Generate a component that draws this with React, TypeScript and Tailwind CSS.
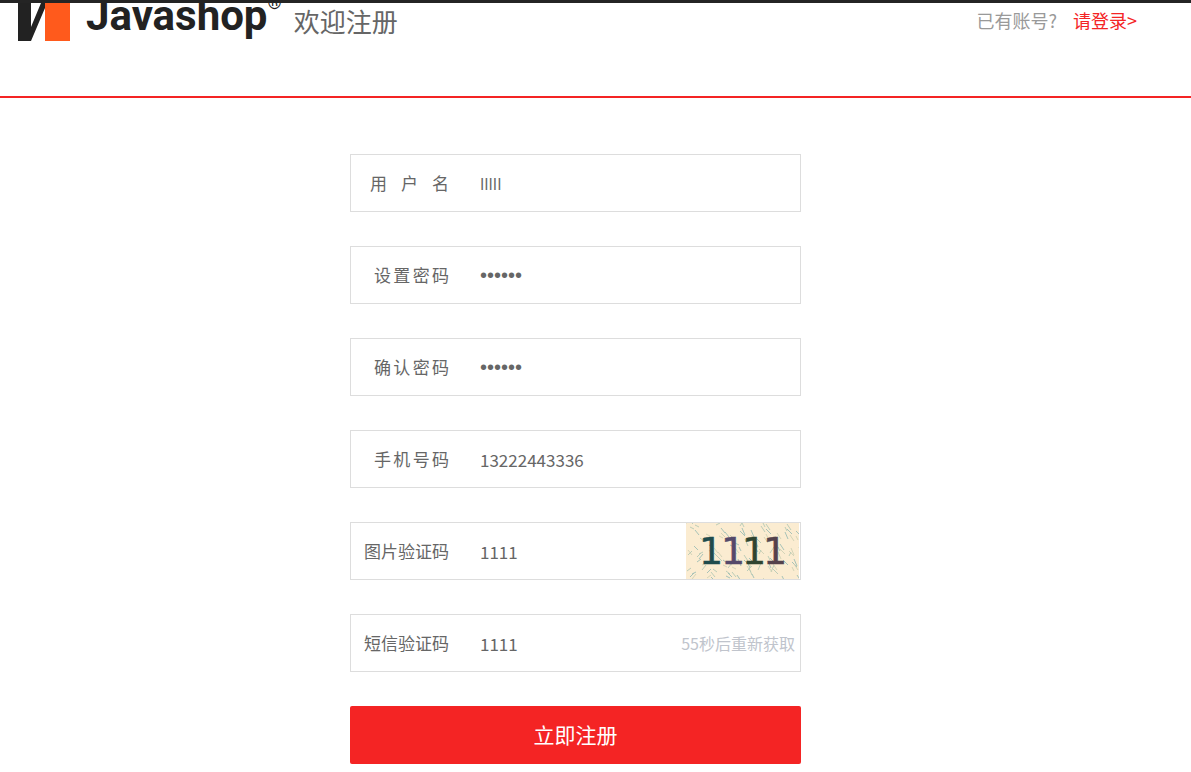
import React, { useState } from 'react'

type Field = {
  id: string
  label: string
  value: string
  type: string
  labelClass: string
  inputClass?: string
  extra?: 'captcha' | 'sms'
}

const passwordFont = "font-['Liberation_Sans',sans-serif] text-xl"

const fields: Field[] = [
  { id: 'username', label: '用户名', value: 'lllll', type: 'text', labelClass: 'w-[79px]', inputClass: "font-['Open_Sans',sans-serif]" },
  { id: 'password', label: '设置密码', value: '111111', type: 'password', labelClass: 'w-[75px]', inputClass: passwordFont },
  { id: 'confirm', label: '确认密码', value: '111111', type: 'password', labelClass: 'w-[75px]', inputClass: passwordFont },
  { id: 'mobile', label: '手机号码', value: '13222443336', type: 'text', labelClass: 'w-[75px]' },
  { id: 'captcha', label: '图片验证码', value: '1111', type: 'text', labelClass: 'w-[85px]', extra: 'captcha' },
  { id: 'sms', label: '短信验证码', value: '1111', type: 'text', labelClass: 'w-[85px]', extra: 'sms' },
]

// Short slanted noise strokes behind the captcha digits
const noise = Array.from({ length: 130 }, (_, i) => {
  const x = (i * 47 + (i % 7) * 5) % 116
  const y = (i * 29 + (i % 5) * 7) % 60
  const dx = x < 50 ? 4 + ((i * 5) % 5) : 2 + ((i * 5) % 4)
  const dy = x < 50 ? 2 + ((i * 3) % 4) : 4 + ((i * 3) % 4)
  const flip = i % 9 === 0 || (x < 25 && y > 30) ? -1 : 1
  return { d: `M${x} ${y}l${dx} ${dy * flip}`, color: ['#b3c8b4', '#9dbdb4', '#cfd1b4'][i % 3] }
})

const digits = [
  { x: 13, color: '#1f4b4c' },
  { x: 35, color: '#55496a' },
  { x: 56, color: '#2f4430' },
  { x: 77, color: '#54424c' },
]

const Captcha: React.FC = () => (
  <button type="button" aria-label="图片验证码" className="mr-px shrink-0 cursor-pointer">
    <svg width="113" height="56" viewBox="0 0 113 56" className="block">
      <rect width="113" height="56" fill="#fbecd1" />
      {noise.map((n, i) => (
        <path key={i} d={n.d} stroke={n.color} strokeWidth="0.9" fill="none" />
      ))}
      <text y="41" fontSize="38" fontFamily="DejaVu Sans, sans-serif">
        {digits.map((d) => (
          <tspan key={d.x} x={d.x} fill={d.color} stroke={d.color} strokeWidth="0.5">
            1
          </tspan>
        ))}
      </text>
    </svg>
  </button>
)

const Logo: React.FC = () => (
  <a href="#" className="flex items-start text-[#222]">
    <svg width="52" height="38" viewBox="0 0 52 38" className="mr-4 shrink-0">
      <path d="M0 0H13V24L23 0H27V5L13 38H0Z" fill="#222" />
      <rect x="27" width="25" height="38" fill="#ff5a1c" />
    </svg>
    <span className="font-[Roboto,sans-serif] text-[42px] leading-[26px] font-bold">Javashop</span>
    <span className="font-[Roboto,sans-serif] text-lg leading-[0px]">®</span>
  </a>
)

const App: React.FC = () => {
  const [values, setValues] = useState<Record<string, string>>(
    Object.fromEntries(fields.map((f) => [f.id, f.value]))
  )

  return (
    <div className="bg-white font-['Noto_Sans_CJK_SC',sans-serif] text-[#666]">
      <header className="flex h-[98px] items-start overflow-hidden border-t-3 border-b-2 border-t-[#242424] border-b-[#f42424] pr-[54px] pl-[18px]">
        <Logo />
        <h1 className="ml-3 text-[26px] leading-9">欢迎注册</h1>
        <p className="ml-auto flex gap-4 text-lg leading-[34px] text-[#999]">
          <span>已有账号?</span>
          <a href="#" className="text-[#f42424]">请登录&gt;</a>
        </p>
      </header>

      <main className="pt-14 pr-10 pb-2">
        <form
          className="mx-auto flex w-full max-w-[451px] flex-col gap-[34px]"
          onSubmit={(e) => e.preventDefault()}
        >
          {fields.map((f) => (
            <div key={f.id} className="flex h-[58px] items-center border border-[#ddd] text-[17px]">
              <label htmlFor={f.id} className="flex w-[98px] shrink-0 justify-end whitespace-nowrap">
                {/* Labels are justified so the characters fill the column */}
                <span className={`${f.labelClass} text-justify [text-align-last:justify]`}>{f.label}</span>
              </label>
              <input
                id={f.id}
                type={f.type}
                value={values[f.id]}
                onChange={(e) => setValues({ ...values, [f.id]: e.target.value })}
                className={`h-full min-w-0 flex-1 pl-[31px] outline-none ${f.inputClass ?? ''}`}
              />
              {f.extra === 'captcha' && <Captcha />}
              {f.extra === 'sms' && (
                <button type="button" disabled className="mr-[5px] shrink-0 text-base text-[#c0c4cc]">
                  55秒后重新获取
                </button>
              )}
            </div>
          ))}
          <button type="submit" className="h-[58px] cursor-pointer rounded-xs bg-[#f42424] text-[21px] text-white">
            立即注册
          </button>
        </form>
      </main>
    </div>
  )
}

export default App
